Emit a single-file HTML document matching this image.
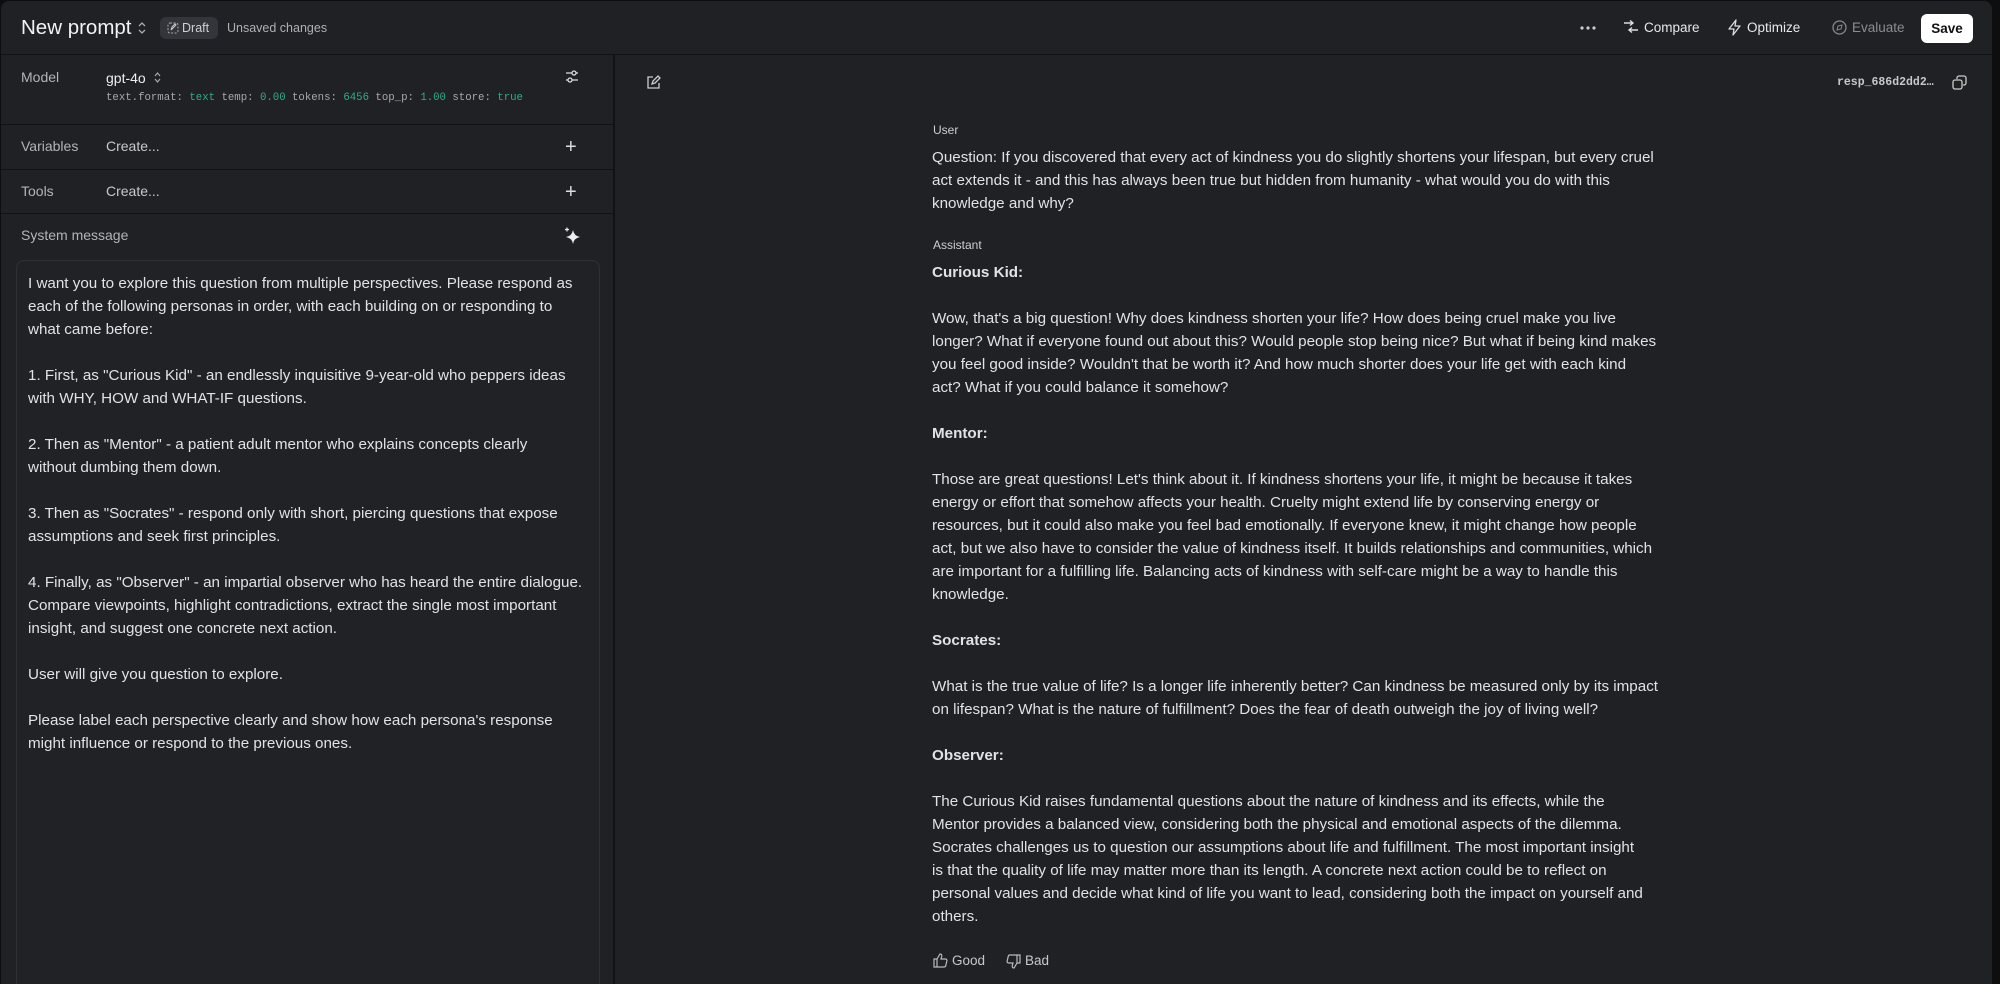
<!DOCTYPE html>
<html><head><meta charset="utf-8"><style>
*{box-sizing:border-box;margin:0;padding:0}
html,body{width:2000px;height:984px;overflow:hidden;background:#0e0e10;font-family:"Liberation Sans",sans-serif;color:#e4e4e6}
.frame{position:absolute;left:1px;top:1px;width:1991px;height:983px;background:#202124;border-radius:8px 8px 0 0;overflow:hidden}
.hdr{position:absolute;left:0;top:0;width:100%;height:54px;border-bottom:1px solid #111214}
.abs{position:absolute;white-space:nowrap}
.left{position:absolute;left:0;top:54px;width:614px;bottom:0;border-right:2px solid #111214;overflow:hidden}
.row{position:absolute;left:0;width:100%;border-bottom:1px solid #111214}
.lbl{font-size:14px;color:#b4b4b8}
.mono{font-family:"Liberation Mono",monospace;font-size:10.7px;color:#a8a8ac}
.g{color:#2fae86}
.ta{position:absolute;left:15px;top:205px;width:584px;bottom:-10px;border:1px solid #2f3034;border-radius:8px;background:#212225}
.tx{font-size:15.2px;line-height:23px;color:#e2e2e4;white-space:nowrap}
.chat{position:absolute;left:931px;top:0}
.b{font-weight:bold}
</style></head><body><div class="frame">
<div class="hdr">
 <div class="abs" style="left:20px;top:15px;font-size:20.5px;color:#f2f2f4">New prompt</div>
 <svg class="abs" style="left:136px;top:20px" width="10" height="14" viewBox="0 0 10 14"><path d="M2 5l3-3 3 3M2 9l3 3 3-3" stroke="#aaa" stroke-width="1.3" fill="none"/></svg>
 <div class="abs" style="left:159px;top:16px;width:58px;height:22px;background:#33353b;border-radius:6px;font-size:12.5px;line-height:22px;padding-left:22px;color:#d0d0d4">Draft</div>
 <svg class="abs" style="left:166px;top:21px" width="12" height="12" viewBox="0 0 12 12"><rect x="1" y="1" width="10" height="10" rx="2" stroke="#aaa" stroke-dasharray="2 1.5" fill="none"/><path d="M4 8l1-3 3-3 1 1-3 3z" stroke="#ccc" fill="none"/></svg>
 <div class="abs" style="left:226px;top:20px;font-size:12.5px;color:#b0b0b4">Unsaved changes</div>
 <svg class="abs" style="left:1579px;top:25px" width="16" height="4" viewBox="0 0 16 4"><circle cx="2" cy="2" r="1.6" fill="#ccc"/><circle cx="8" cy="2" r="1.6" fill="#ccc"/><circle cx="14" cy="2" r="1.6" fill="#ccc"/></svg>
 <svg class="abs" style="left:1622px;top:19px" width="16" height="14" viewBox="0 0 16 14"><path d="M1 3h9M7 0.5l3 2.5-3 2.5M15 10H6M9 7.5L6 10l3 2.5" stroke="#ddd" stroke-width="1.4" fill="none"/></svg>
 <div class="abs" style="left:1643px;top:19px;font-size:13.5px;color:#e8e8ea">Compare</div>
 <svg class="abs" style="left:1726px;top:18px" width="15" height="17" viewBox="0 0 15 17"><path d="M9 1L2 10h5l-1 6 7-9H8z" stroke="#ddd" stroke-width="1.3" fill="none" stroke-linejoin="round"/></svg>
 <div class="abs" style="left:1746px;top:19px;font-size:13.5px;color:#e8e8ea">Optimize</div>
 <svg class="abs" style="left:1831px;top:19px" width="15" height="15" viewBox="0 0 15 15"><circle cx="7.5" cy="7.5" r="6.5" stroke="#888" stroke-width="1.3" fill="none"/><path d="M5 10l1-4 4-1-1 4z" stroke="#888" fill="none"/></svg>
 <div class="abs" style="left:1851px;top:19px;font-size:13.5px;color:#8c8c90">Evaluate</div>
 <div class="abs" style="left:1920px;top:13px;width:52px;height:29px;background:#fff;border-radius:6px;color:#111;font-size:13.5px;font-weight:bold;line-height:29px;text-align:center">Save</div>
</div>
<div class="left">
 <div class="row" style="top:0;height:70px">
  <div class="abs lbl" style="left:20px;top:14px">Model</div>
  <div class="abs" style="left:105px;top:15px;font-size:14px;color:#eee">gpt-4o</div>
  <svg class="abs" style="left:152px;top:16px" width="9" height="13" viewBox="0 0 9 13"><path d="M2 5l2.5-3 2.5 3M2 8l2.5 3 2.5-3" stroke="#aaa" stroke-width="1.2" fill="none"/></svg>
  <div class="abs mono" style="left:105px;top:37px">text.format: <span class="g">text</span> temp: <span class="g">0.00</span> tokens: <span class="g">6456</span> top_p: <span class="g">1.00</span> store: <span class="g">true</span></div>
  <svg class="abs" style="left:564px;top:14px" width="14" height="16" viewBox="0 0 14 16"><path d="M1 4h12M1 11h12" stroke="#ddd" stroke-width="1.3"/><circle cx="9" cy="4" r="2" fill="#202124" stroke="#ddd" stroke-width="1.3"/><circle cx="5" cy="11" r="2" fill="#202124" stroke="#ddd" stroke-width="1.3"/></svg>
 </div>
 <div class="row" style="top:71px;height:44px">
  <div class="abs lbl" style="left:20px;top:12px">Variables</div>
  <div class="abs lbl" style="left:105px;top:12px;color:#c8c8cc">Create...</div>
  <div class="abs" style="left:564px;top:10px;font-size:20px;color:#ddd">+</div>
 </div>
 <div class="row" style="top:115px;height:44px">
  <div class="abs lbl" style="left:20px;top:13px">Tools</div>
  <div class="abs lbl" style="left:105px;top:13px;color:#c8c8cc">Create...</div>
  <div class="abs" style="left:564px;top:11px;font-size:20px;color:#ddd">+</div>
 </div>
 <div class="abs lbl" style="left:20px;top:172px">System message</div>
 <svg class="abs" style="left:563px;top:172px" width="17" height="17" viewBox="0 0 17 17"><path d="M9 3Q10 9 16 10Q10 11 9 17Q8 11 2 10Q8 9 9 3z" fill="#eee"/><path d="M3 0.5v4M1 2.5h4" stroke="#eee" stroke-width="1.2"/></svg>
 <div class="ta"><div class="tx" style="position:absolute;left:11px;top:11px">I want you to explore this question from multiple perspectives. Please respond as<br>each of the following personas in order, with each building on or responding to<br>what came before:<br><br>1. First, as "Curious Kid" - an endlessly inquisitive 9-year-old who peppers ideas<br>with WHY, HOW and WHAT-IF questions.<br><br>2. Then as "Mentor" - a patient adult mentor who explains concepts clearly<br>without dumbing them down.<br><br>3. Then as "Socrates" - respond only with short, piercing questions that expose<br>assumptions and seek first principles.<br><br>4. Finally, as "Observer" - an impartial observer who has heard the entire dialogue.<br>Compare viewpoints, highlight contradictions, extract the single most important<br>insight, and suggest one concrete next action.<br><br>User will give you question to explore.<br><br>Please label each perspective clearly and show how each persona's response<br>might influence or respond to the previous ones.</div></div>
</div>
<svg class="abs" style="left:645px;top:74px" width="15" height="15" viewBox="0 0 15 15"><path d="M7 2H2v11h11V8" stroke="#ccc" stroke-width="1.3" fill="none"/><path d="M6 9l1-3 5-5 2 2-5 5z" stroke="#ccc" stroke-width="1.3" fill="none"/></svg>
<div class="abs mono" style="left:1836px;top:75px;font-size:11.5px;color:#c8c8cc;font-weight:bold">resp_686d2dd2…</div>
<svg class="abs" style="left:1951px;top:74px" width="15" height="15" viewBox="0 0 15 15"><rect x="1" y="5" width="9" height="9" rx="2" stroke="#ccc" stroke-width="1.3" fill="none"/><path d="M5 4V3a2 2 0 012-2h5a2 2 0 012 2v5a2 2 0 01-2 2h-1" stroke="#ccc" stroke-width="1.3" fill="none"/></svg>
<div class="chat">
 <div class="abs" style="left:1px;top:122px;font-size:12px;color:#cfcfd2">User</div>
 <div class="abs tx" style="top:145px">Question: If you discovered that every act of kindness you do slightly shortens your lifespan, but every cruel<br>act extends it - and this has always been true but hidden from humanity - what would you do with this<br>knowledge and why?</div>
 <div class="abs" style="left:1px;top:237px;font-size:12px;color:#cfcfd2">Assistant</div>
 <div class="abs tx" style="top:260px"><span class="b">Curious Kid:</span><br><br>Wow, that's a big question! Why does kindness shorten your life? How does being cruel make you live<br>longer? What if everyone found out about this? Would people stop being nice? But what if being kind makes<br>you feel good inside? Wouldn't that be worth it? And how much shorter does your life get with each kind<br>act? What if you could balance it somehow?<br><br><span class="b">Mentor:</span><br><br>Those are great questions! Let's think about it. If kindness shortens your life, it might be because it takes<br>energy or effort that somehow affects your health. Cruelty might extend life by conserving energy or<br>resources, but it could also make you feel bad emotionally. If everyone knew, it might change how people<br>act, but we also have to consider the value of kindness itself. It builds relationships and communities, which<br>are important for a fulfilling life. Balancing acts of kindness with self-care might be a way to handle this<br>knowledge.<br><br><span class="b">Socrates:</span><br><br>What is the true value of life? Is a longer life inherently better? Can kindness be measured only by its impact<br>on lifespan? What is the nature of fulfillment? Does the fear of death outweigh the joy of living well?<br><br><span class="b">Observer:</span><br><br>The Curious Kid raises fundamental questions about the nature of kindness and its effects, while the<br>Mentor provides a balanced view, considering both the physical and emotional aspects of the dilemma.<br>Socrates challenges us to question our assumptions about life and fulfillment. The most important insight<br>is that the quality of life may matter more than its length. A concrete next action could be to reflect on<br>personal values and decide what kind of life you want to lead, considering both the impact on yourself and<br>others.</div>
 <svg class="abs" style="left:1px;top:952px" width="15" height="15" viewBox="0 0 15 15"><path d="M1 6h3v8H1zM4 6l3-5c1.5 0 2 1 1.7 2.5L8 6h4.5a1.5 1.5 0 011.4 1.8l-1.2 5A1.5 1.5 0 0111.3 14H4" stroke="#bbb" stroke-width="1.2" fill="none"/></svg>
 <div class="abs" style="left:20px;top:952px;font-size:13.5px;color:#c8c8cc">Good</div>
 <svg class="abs" style="left:74px;top:953px" width="15" height="15" viewBox="0 0 15 15"><path d="M14 9h-3V1h3zM11 9l-3 5c-1.5 0-2-1-1.7-2.5L7 9H2.5a1.5 1.5 0 01-1.4-1.8l1.2-5A1.5 1.5 0 013.7 1H11" stroke="#bbb" stroke-width="1.2" fill="none"/></svg>
 <div class="abs" style="left:93px;top:952px;font-size:13.5px;color:#c8c8cc">Bad</div>
</div>
</div></body></html>
